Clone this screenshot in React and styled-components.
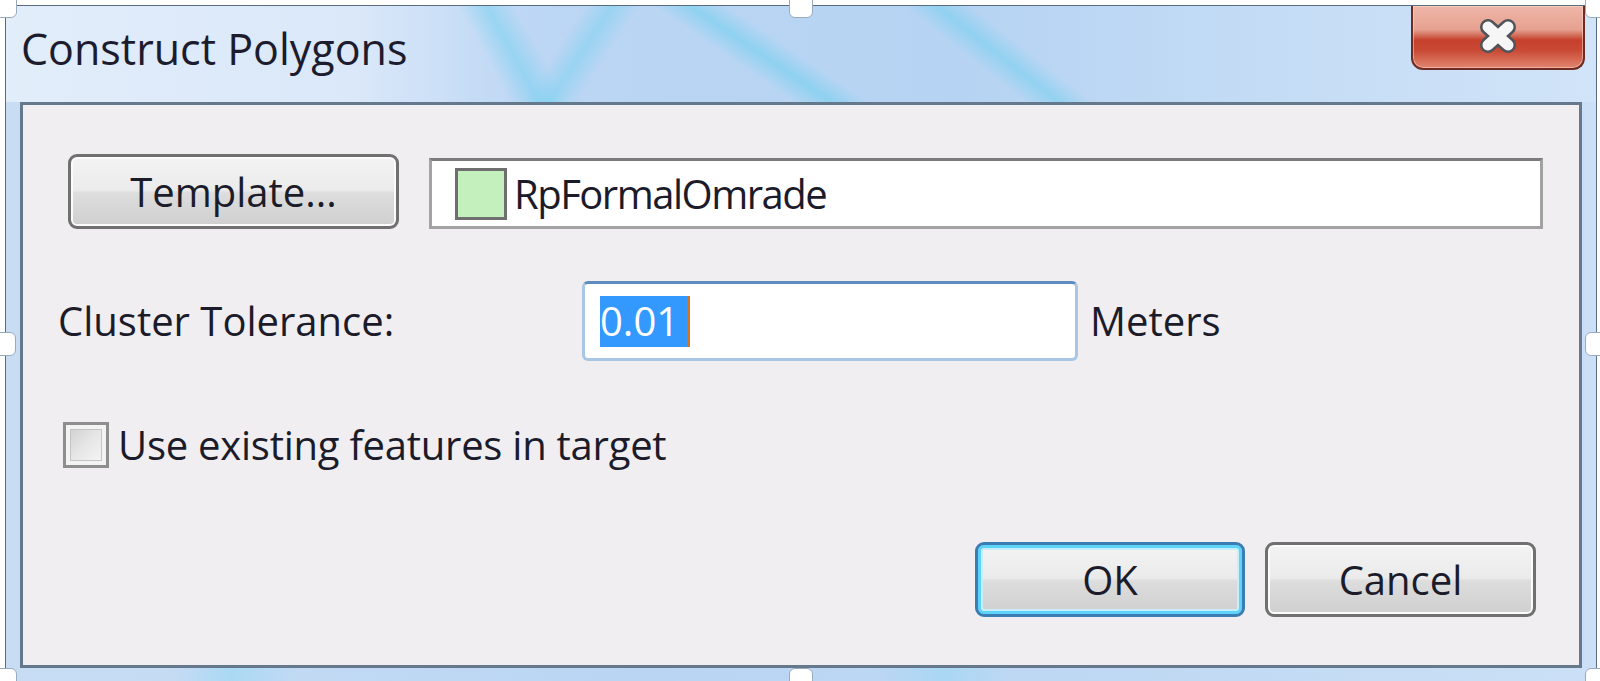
import React from "react"
import styled, {createGlobalStyle, css} from "styled-components"

const GlobalStyle = createGlobalStyle`
  * { box-sizing: border-box; }
  html, body { margin: 0; padding: 0; background: #ffffff; overflow: hidden; }
  body { font-family: "Open Sans", "Noto Sans", "Liberation Sans", sans-serif; }
`

const handles = [
  {x: 5, y: 6}, {x: 801, y: 6}, {x: 1597, y: 6},
  {x: 4, y: 344}, {x: 1597, y: 344},
  {x: 5, y: 680}, {x: 801, y: 680}, {x: 1597, y: 680},
]

export default function App () {
  return (
    <>
      <GlobalStyle />
      <Stage>
        <Window>
          <TitleBar>
            <Title>Construct Polygons</Title>
            <CloseButton aria-label = "Close">
              <svg width = "42" height = "38" viewBox = "0 0 42 38">
                <path d = "M11 10 L31 28 M31 10 L11 28" stroke = "#50545a" strokeWidth = "16" strokeLinecap = "round" fill = "none" />
                <path d = "M11 10 L31 28 M31 10 L11 28" stroke = "#f6f6f6" strokeWidth = "11" strokeLinecap = "round" fill = "none" />
              </svg>
            </CloseButton>
          </TitleBar>

          <Client>
            <TemplateRow>
              <Button width = {331}>Template...</Button>
              <SymbolBox>
                <Swatch />
                <LayerName>RpFormalOmrade</LayerName>
              </SymbolBox>
            </TemplateRow>

            <ToleranceRow>
              <Label width = {524}>Cluster Tolerance:</Label>
              <NumberField>
                <Selected>0.01</Selected>
                <Caret />
              </NumberField>
              <Unit>Meters</Unit>
            </ToleranceRow>

            <CheckRow>
              <CheckBox />
              <Label tight>Use existing features in target</Label>
            </CheckRow>

            <ButtonRow>
              <Button width = {270} primary>OK</Button>
              <Button width = {271}>Cancel</Button>
            </ButtonRow>
          </Client>
        </Window>

        {handles.map((h, i) => <Handle key = {i} x = {h.x} y = {h.y} />)}
      </Stage>
    </>
  )
}

const Stage = styled.div`
  position: relative;
  width: 1600px;
  height: 681px;
  overflow: hidden;
  padding: 5px 3px 0 5px;
`

const Window = styled.div`
  height: 690px;
  border: 1px solid #596c82;
  border-bottom: none;
  border-radius: 8px 8px 0 0;
  padding: 0 14px;
  display: flex;
  flex-direction: column;
  background:
    linear-gradient(100deg, transparent 17%, rgba(140, 215, 245, 0.45) 20%, transparent 24%),
    linear-gradient(80deg, transparent 51%, rgba(140, 215, 245, 0.4) 55%, transparent 59%),
    linear-gradient(90deg, #c8ddf4 0%, #b9d5f3 40%, #bfd8f3 70%, #cbe0f6 100%);
`

/* aero glass: soft base plus four cyan streaks, stops worked out for a 1590x96 box */
const TitleBar = styled.div`
  height: 96px;
  flex: none;
  margin: 0 -14px;
  padding: 0 14px;
  display: flex;
  justify-content: space-between;
  align-items: flex-start;
  border-radius: 7px 7px 0 0;
  background:
    linear-gradient(61.1deg, transparent 442px, rgba(125, 210, 240, 0.6) 467px, transparent 492px),
    linear-gradient(123.3deg, transparent 484px, rgba(125, 210, 240, 0.55) 507px, transparent 530px),
    linear-gradient(34.2deg, transparent 443px, rgba(120, 208, 238, 0.65) 464px, transparent 485px),
    linear-gradient(38.2deg, transparent 630px, rgba(120, 208, 238, 0.6) 651px, transparent 672px),
    linear-gradient(90deg, #e2edfa 0%, #dae8f9 22%, #bcd6f4 33%, #b6d3f3 60%, #c3dbf5 78%, #d1e4f8 100%);
`

const Title = styled.div`
  margin-top: 16px;
  margin-left: 1px;
  font-size: 43px;
  line-height: 54px;
  color: #1c1c2e;
`

const CloseButton = styled.div`
  width: 174px;
  height: 64px;
  margin-right: -3px;
  display: flex;
  align-items: center;
  justify-content: center;
  padding-bottom: 2px;
  border: 2px solid #6e2b22;
  border-top: none;
  border-radius: 0 0 12px 12px;
  background: linear-gradient(180deg, #efb6a8 0%, #e6a190 38%, #d06a55 48%, #c6402c 55%, #c94a35 72%, #e18670 100%);
  box-shadow: inset 0 0 0 1px rgba(255, 220, 210, 0.5);
`

const Client = styled.div`
  height: 566px;
  flex: none;
  border: 3px solid #65788c;
  background: #f0eef1;
  padding: 49px 36px 0 35px;
  display: flex;
  flex-direction: column;
  font-size: 40px;
  color: #1b1b2a;
`

const Row = styled.div`
  display: flex;
  align-items: center;
`

const TemplateRow = styled(Row)`
  align-items: flex-end;
  gap: 30px;
  padding-left: 10px;
`

const ToleranceRow = styled(Row)`
  margin-top: 52px;
  height: 80px;
`

const CheckRow = styled(Row)`
  margin-top: 61px;
  padding-left: 5px;
  gap: 9px;
`

const ButtonRow = styled(Row)`
  margin-top: 74px;
  justify-content: flex-end;
  gap: 20px;
  padding-right: 7px;
`

const Button = styled.div`
  width: ${props => props.width}px;
  height: 75px;
  flex: none;
  display: flex;
  align-items: center;
  justify-content: center;
  border: 3px solid #707070;
  border-radius: 9px;
  background: linear-gradient(180deg, #f3f3f3 0%, #ebebeb 48%, #dddddd 52%, #cfcfcf 100%);
  box-shadow: inset 0 0 0 2px #fbfbfb;
  line-height: 1;
  ${props => props.primary && css`
    border-color: #3a7db3;
    box-shadow: inset 0 0 0 3px #5fd4fa, inset 0 0 0 5px #c8eefb;
  `}
`

const SymbolBox = styled.div`
  flex: 1;
  height: 71px;
  display: flex;
  align-items: center;
  gap: 7px;
  padding-left: 23px;
  background: #ffffff;
  border: 3px solid #a2a2a2;
  border-top-color: #7b7b7b;
`

const Swatch = styled.div`
  width: 52px;
  height: 52px;
  background: #c3f0bc;
  border: 3px solid #6f6f6f;
`

const LayerName = styled.span`
  letter-spacing: -1.5px;
`

const Label = styled.div`
  flex: none;
  width: ${props => props.width ? props.width + "px" : "auto"};
  line-height: 1;
  letter-spacing: ${props => props.tight ? "-0.25px" : "0"};
`

const NumberField = styled.div`
  width: 496px;
  height: 80px;
  display: flex;
  align-items: center;
  padding-left: 15px;
  background: #ffffff;
  border: 3px solid #a9c7e4;
  border-top-color: #5e8cbe;
  border-radius: 6px;
`

const Selected = styled.span`
  height: 51px;
  padding: 0 8px 0 0;
  display: flex;
  align-items: center;
  background: #3399ff;
  color: #ffffff;
  line-height: 1;
`

const Caret = styled.span`
  width: 3px;
  height: 51px;
  background: #d9731f;
`

const Unit = styled.div`
  margin-left: 12px;
  line-height: 1;
`

const CheckBox = styled.div`
  width: 46px;
  height: 46px;
  flex: none;
  border: 3px solid #8e8e8e;
  background: linear-gradient(135deg, #cdcdcd 0%, #e6e6e6 50%, #f8f8f8 100%);
  box-shadow: inset 0 0 0 4px #f3f3f3, inset 0 0 0 5px #c4c4c4;
`

const Handle = styled.div`
  position: absolute;
  left: ${props => props.x - 12}px;
  top: ${props => props.y - 12}px;
  width: 24px;
  height: 24px;
  border-radius: 6px;
  background: #ffffff;
  border: 1px solid #98aabd;
`
